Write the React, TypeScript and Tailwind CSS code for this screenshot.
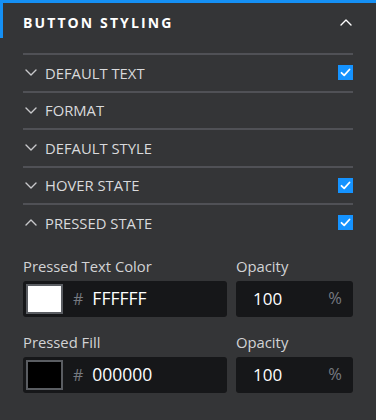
import React from "react";

const font = { fontFamily: '"Open Sans", "Noto Sans", sans-serif' };

function Chevron({ up = false, className = "" }: { up?: boolean; className?: string }) {
  return (
    <svg width="12" height="7" viewBox="0 0 12 7" className={className} fill="none">
      <polyline
        points={up ? "1,6 6,1 11,6" : "1,1 6,6 11,1"}
        stroke="currentColor"
        strokeWidth="1.4"
        strokeLinecap="round"
        strokeLinejoin="round"
      />
    </svg>
  );
}

function Check() {
  return (
    <div className="w-[15px] h-[15px] bg-[#1593ff] flex items-center justify-center">
      <svg width="11" height="9" viewBox="0 0 11 9" fill="none">
        <polyline points="1.5,4.8 4.2,7.3 9.5,1.5" stroke="white" strokeWidth="1.8" strokeLinecap="round" strokeLinejoin="round" />
      </svg>
    </div>
  );
}

const rows = [
  { label: "DEFAULT TEXT", checked: true },
  { label: "FORMAT", checked: false },
  { label: "DEFAULT STYLE", checked: false },
  { label: "HOVER STATE", checked: true },
  { label: "PRESSED STATE", checked: true, open: true },
];

function ColorField({ label, color, hex }: { label: string; color: string; hex: string }) {
  return (
    <div className="grid grid-cols-[204px_117px] gap-x-[9px]">
      <div className="text-[14.8px] text-[#d2d3d5] h-[24px] leading-[24px]">{label}</div>
      <div className="text-[14.8px] text-[#d2d3d5] h-[24px] leading-[24px]">Opacity</div>
      <div className="h-[36px] bg-[#161719] rounded-[3px] flex items-center pl-[3px] mt-[3px]">
        <div className="w-[37px] h-[30px] border-2 border-[#5a5d62]" style={{ backgroundColor: color }} />
        <span className="ml-[10px] text-[16px] text-[#767a81]">#</span>
        <span className="ml-[9px] text-[17.5px] text-white">{hex}</span>
      </div>
      <div className="h-[36px] bg-[#161719] rounded-[3px] flex items-center justify-between pl-[17px] pr-[11px] mt-[3px]">
        <span className="text-[17px] text-white">100</span>
        <span className="text-[16.5px] text-[#767a81]">%</span>
      </div>
    </div>
  );
}

export default function App() {
  return (
    <div className="w-[376px] h-[420px] bg-[#343537] relative overflow-hidden" style={font}>
      <div className="absolute left-0 top-0 w-full h-[3px] bg-[#1590f5]" />
      <div className="absolute left-0 top-0 w-[3px] h-[38px] bg-[#1590f5]" />
      <div className="px-[23px]">
        <div className="h-[53px] pt-[3px] flex items-center justify-between pb-[12px]">
          <span className="text-[14px] font-bold tracking-[0.15em] text-white">BUTTON STYLING</span>
          <Chevron up className="text-white mr-[1px]" />
        </div>
        {rows.map((r) => (
          <div
            key={r.label}
            className="h-[37.5px] border-t-2 border-[#505156] flex items-center justify-between"
          >
            <div className="flex items-center">
              <Chevron up={r.open} className="text-[#c8c9cb] ml-[2px]" />
              <span className="ml-[8px] text-[14.8px] text-[#d9dadc]">{r.label}</span>
            </div>
            {r.checked && <Check />}
          </div>
        ))}
        <div className="mt-[13px] flex flex-col gap-[13px]">
          <ColorField label="Pressed Text Color" color="#ffffff" hex="FFFFFF" />
          <ColorField label="Pressed Fill" color="#000000" hex="000000" />
        </div>
      </div>
    </div>
  );
}
